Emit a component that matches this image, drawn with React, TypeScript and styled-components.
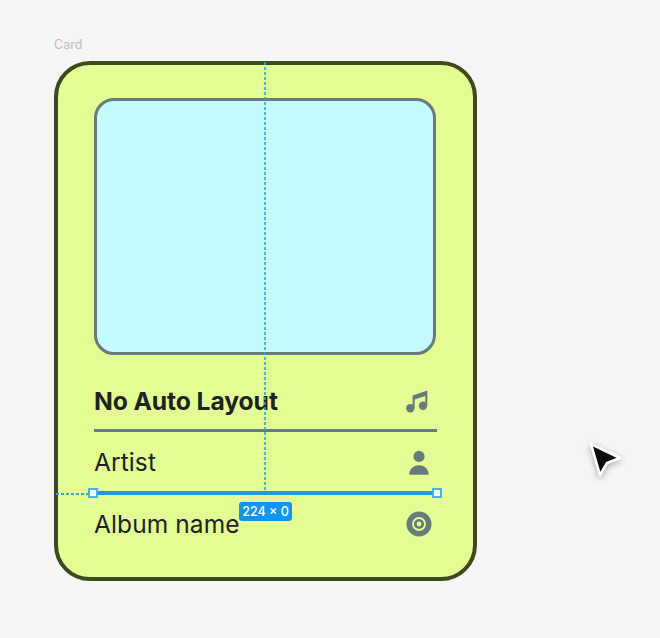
import React from "react";
import styled, { createGlobalStyle } from "styled-components";

const Global = createGlobalStyle`
  html, body { margin: 0; padding: 0; background: #f5f5f5; }
  body { font-family: Inter, "Liberation Sans", sans-serif; }
`;

const Canvas = styled.div`
  position: relative;
  width: 660px;
  height: 638px;
  overflow: hidden;
  padding: 38px 0 0 54px;
  box-sizing: border-box;
`;

const FrameLabel = styled.div`
  font-size: 12.5px;
  line-height: 14px;
  color: #bcbcbc;
  margin-bottom: 9px;
`;

const Card = styled.div`
  width: 422.5px;
  height: 520px;
  box-sizing: border-box;
  background: #e3fd94;
  border: 4px solid #3d4a1c;
  border-radius: 36px;
  padding: 33px 36px 0;
  color: #1b2420;
`;

const Artwork = styled.div`
  width: 342px;
  height: 257px;
  box-sizing: border-box;
  background: #c5fafc;
  border: 3px solid #667c7c;
  border-radius: 20px;
`;

const Row = styled.div<{ $divider?: boolean; $top?: number; $offset?: number }>`
  width: 343px;
  height: ${(p) => 60 - (p.$offset ?? 0)}px;
  padding-top: ${(p) => p.$offset ?? 0}px;
  box-sizing: content-box;
  margin-top: ${(p) => p.$top ?? 0}px;
  display: flex;
  align-items: center;
  justify-content: space-between;
  border-bottom: 3px solid ${(p) => (p.$divider ? "#667c7c" : "transparent")};
`;

const Label = styled.span<{ $bold?: boolean }>`
  font-size: ${(p) => (p.$bold ? 24.7 : 24.5)}px;
  line-height: 30px;
  font-weight: ${(p) => (p.$bold ? 700 : 400)};
  letter-spacing: ${(p) => (p.$bold ? "-0.1px" : "0.1px")};
`;

const IconSlot = styled.span<{ $inset: number }>`
  width: 26px;
  height: 26px;
  margin-right: ${(p) => p.$inset}px;
  display: flex;
  align-items: center;
  justify-content: center;
  color: #667c7c;
`;

const GuideV = styled.div`
  position: absolute;
  left: 264px;
  top: 62px;
  width: 2px;
  height: 431px;
  background: repeating-linear-gradient(rgba(47, 169, 196, 0.8) 0 3px, transparent 3px 5px);
`;

const GuideH = styled.div`
  position: absolute;
  left: 56px;
  top: 493px;
  width: 37px;
  height: 1.5px;
  background: repeating-linear-gradient(90deg, #2fa9c4 0 3px, transparent 3px 5px);
`;

const Measure = styled.div`
  position: absolute;
  left: 93px;
  top: 491px;
  width: 344px;
  height: 3.5px;
  background: #2b95d6;
`;

const Handle = styled.div<{ $side: "left" | "right" }>`
  position: absolute;
  ${(p) => p.$side}: -5px;
  top: -3px;
  width: 10px;
  height: 10px;
  box-sizing: border-box;
  background: #fff;
  border: 2px solid #4db0ea;
`;

const SizeBadge = styled.div`
  position: absolute;
  left: 239px;
  top: 502px;
  width: 53px;
  height: 19px;
  border-radius: 3px;
  background: #0f96f0;
  color: #fff;
  font-size: 12.5px;
  font-weight: 500;
  display: flex;
  align-items: center;
  justify-content: center;
`;

const Pointer = styled.svg`
  position: absolute;
  left: 584px;
  top: 438px;
  filter: drop-shadow(0 2px 3px rgba(0, 0, 0, 0.3));
`;

const Note = () => (
  <svg width="26" height="26" viewBox="0 0 26 26" fill="currentColor">
    <circle cx="6.3" cy="20.2" r="4.2" />
    <circle cx="19" cy="17.8" r="4.2" />
    <path d="M8.6 20.2V7.6L23.3 2.6v15.2h-2V8L10.6 11.4v8.8z" />
  </svg>
);

const Person = () => (
  <svg width="26" height="26" viewBox="0 0 26 26" fill="currentColor">
    <circle cx="13" cy="7.400" r="5.600" />
    <path d="M4.300 25.700c-.9 0-1.300-.7-1-1.500C4.300 19.300 8 16.200 13 16.200s8.700 3.100 9.700 8c.2.800-.1 1.500-1 1.500z" />
  </svg>
);

const Disc = () => (
  <svg width="26" height="26" viewBox="0 0 26 26">
    <circle cx="13" cy="13" r="12.500" fill="currentColor" />
    <circle cx="13" cy="13" r="6" fill="none" stroke="#e3fd94" strokeWidth="1.800" />
    <circle cx="13" cy="13" r="2.400" fill="#e3fd94" />
  </svg>
);

export default function App() {
  return (
    <Canvas>
      <Global />
      <FrameLabel>Card</FrameLabel>
      <Card>
        <Artwork />
        <Row $divider $top={14} $offset={4}>
          <Label $bold>No Auto Layout</Label>
          <IconSlot $inset={7}><Note /></IconSlot>
        </Row>
        <Row>
          <Label>Artist</Label>
          <IconSlot $inset={5}><Person /></IconSlot>
        </Row>
        <Row $top={-1}>
          <Label>Album name</Label>
          <IconSlot $inset={5}><Disc /></IconSlot>
        </Row>
      </Card>
      <GuideV />
      <GuideH />
      <Measure>
        <Handle $side="left" />
        <Handle $side="right" />
      </Measure>
      <SizeBadge>224 × 0</SizeBadge>
      <Pointer width="40" height="42" viewBox="0 0 40 42">
        <path d="M7 6 L36 20 L23 25 L16 37 Z" fill="#0c0c0c" stroke="#fff" strokeWidth="2.500" strokeLinejoin="round" />
      </Pointer>
    </Canvas>
  );
}
